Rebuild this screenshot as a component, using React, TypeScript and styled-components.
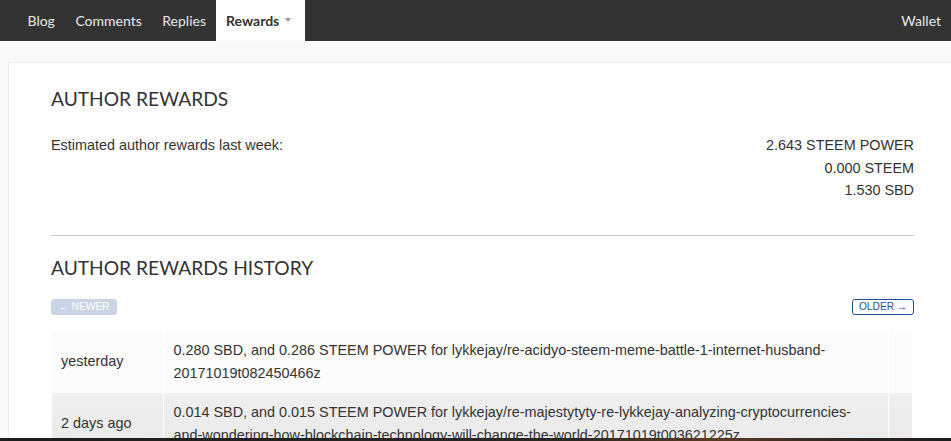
import React from 'react';
import styled, { createGlobalStyle } from 'styled-components';

const GlobalStyle = createGlobalStyle`
  html, body {
    margin: 0;
    padding: 0;
    overflow: hidden;
    background: #fafafa;
  }
  * {
    box-sizing: border-box;
  }
`;

const Page = styled.div`
  width: 951px;
  height: 441px;
  overflow: hidden;
  background: #fafafa;
  position: relative;
`;

const TopBar = styled.nav`
  height: 41px;
  background: #333333;
  display: flex;
  align-items: stretch;
  justify-content: space-between;
  padding: 0 0 0 17px;
  font-family: Lato, 'Open Sans', sans-serif;
  font-size: 14px;
`;

const NavGroup = styled.div`
  display: flex;
  align-items: stretch;
`;

const NavLink = styled.a<{ active?: boolean }>`
  display: flex;
  align-items: center;
  gap: 6px;
  padding: 0 ${(p) => (p.active ? '14px' : '10px')} 0 ${(p) => (p.active ? '10px' : '10.5px')};
  color: ${(p) => (p.active ? '#333333' : '#e8e8e8')};
  background: ${(p) => (p.active ? '#ffffff' : 'transparent')};
  font-weight: ${(p) => (p.active ? 700 : 400)};
  text-decoration: none;
`;

const Caret = styled.span`
  width: 0;
  height: 0;
  border-left: 3.5px solid transparent;
  border-right: 3.5px solid transparent;
  border-top: 4px solid #9a9a9a;
  margin-top: -2px;
`;

const Card = styled.div`
  margin: 21px 0 0 8px;
  width: 948px;
  background: #ffffff;
  border: 1px solid #ececec;
  border-right: none;
  padding: 24px 42px 0 42px;
  font-family: 'Liberation Sans', Arial, sans-serif;
  color: #333333;
  min-height: 400px;
`;

const Heading = styled.h2`
  margin: 0;
  font-family: Lato, 'Open Sans', sans-serif;
  font-weight: 400;
  font-size: 19.2px;
  line-height: 24px;
  color: #333333;
`;

const EstimateRow = styled.div`
  display: flex;
  justify-content: space-between;
  margin-top: 23px;
  font-size: 14.4px;
  line-height: 22.5px;
`;

const Values = styled.div`
  text-align: right;
`;

const Divider = styled.hr`
  border: none;
  border-top: 1px solid #cccccc;
  margin: 33px 0 20px;
`;

const Pager = styled.div`
  display: flex;
  justify-content: space-between;
  margin-top: 19px;
`;

const PagerButton = styled.span<{ disabled?: boolean }>`
  display: inline-flex;
  align-items: center;
  justify-content: center;
  height: 16px;
  min-width: ${(p) => (p.disabled ? '66px' : '62px')};
  border-radius: 3px;
  font-size: 10.2px;
  color: ${(p) => (p.disabled ? '#ffffff' : '#1f4f96')};
  background: ${(p) => (p.disabled ? '#c9d5e5' : '#ffffff')};
  border: 1px solid ${(p) => (p.disabled ? '#c9d5e5' : '#1f4f96')};
`;

const Table = styled.table`
  margin: 16px 0 0 1px;
  width: 860px;
  border-collapse: collapse;
  font-size: 14.4px;
  line-height: 23px;
  color: #333333;
`;

const Row = styled.tr<{ shade?: boolean }>`
  background: ${(p) => (p.shade ? 'linear-gradient(#efefef, #e9e9e9)' : '#fcfcfc')};
`;

const Cell = styled.td`
  padding: 8px 10px;
  vertical-align: middle;
  border-left: 1px solid #ffffff;
  border-right: 1px solid #ffffff;
  &:first-child {
    border-left: none;
    width: 111px;
    padding-left: 9px;
  }
  &:last-child {
    border-right: none;
    width: 24px;
    padding: 0;
  }
`;

const DockEdge = styled.div`
  position: absolute;
  left: 0;
  right: 0;
  bottom: 0;
  height: 3px;
  background: linear-gradient(90deg, #1c1c1c, #2a2622 60%, #5a3a24 75%, #2b2420 90%, #1c1c1c);
`;

const history = [
  {
    when: 'yesterday',
    text: '0.280 SBD, and 0.286 STEEM POWER for lykkejay/re-acidyo-steem-meme-battle-1-internet-husband-20171019t082450466z'
  },
  {
    when: '2 days ago',
    text: '0.014 SBD, and 0.015 STEEM POWER for lykkejay/re-majestytyty-re-lykkejay-analyzing-cryptocurrencies-and-wondering-how-blockchain-technology-will-change-the-world-20171019t003621225z'
  }
];

function App() {
  return (
    <Page>
      <GlobalStyle />
      <TopBar>
        <NavGroup>
          <NavLink>Blog</NavLink>
          <NavLink>Comments</NavLink>
          <NavLink>Replies</NavLink>
          <NavLink active>
            Rewards <Caret />
          </NavLink>
        </NavGroup>
        <NavLink>Wallet</NavLink>
      </TopBar>

      <Card>
        <Heading>AUTHOR REWARDS</Heading>
        <EstimateRow>
          <div>Estimated author rewards last week:</div>
          <Values>
            <div>2.643 STEEM POWER</div>
            <div>0.000 STEEM</div>
            <div>1.530 SBD</div>
          </Values>
        </EstimateRow>

        <Divider />

        <Heading>AUTHOR REWARDS HISTORY</Heading>
        <Pager>
          <PagerButton disabled>← NEWER</PagerButton>
          <PagerButton>OLDER →</PagerButton>
        </Pager>

        <Table>
          <tbody>
            {history.map((item, index) => (
              <Row key={item.when} shade={index % 2 === 1}>
                <Cell>{item.when}</Cell>
                <Cell>{item.text}</Cell>
                <Cell />
              </Row>
            ))}
          </tbody>
        </Table>
      </Card>
      <DockEdge />
    </Page>
  );
}

export default App;
